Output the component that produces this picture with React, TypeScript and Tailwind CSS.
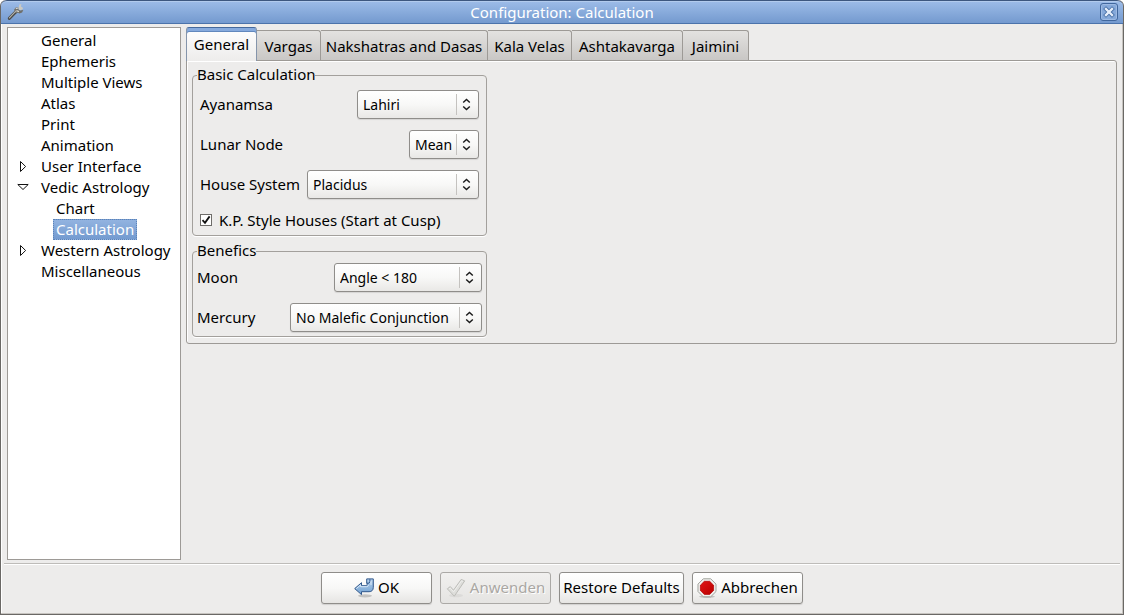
import React, { useState } from "react";

type TreeNode = { label: string; children?: TreeNode[] };

const tree: TreeNode[] = [
  { label: "General" },
  { label: "Ephemeris" },
  { label: "Multiple Views" },
  { label: "Atlas" },
  { label: "Print" },
  { label: "Animation" },
  { label: "User Interface", children: [] },
  { label: "Vedic Astrology", children: [{ label: "Chart" }, { label: "Calculation" }] },
  { label: "Western Astrology", children: [] },
  { label: "Miscellaneous" },
];

const tabs = [
  { label: "General", width: "w-[71px]" },
  { label: "Vargas", width: "w-[64px]" },
  { label: "Nakshatras and Dasas", width: "w-[167px]" },
  { label: "Kala Velas", width: "w-[84px]" },
  { label: "Ashtakavarga", width: "w-[111px]" },
  { label: "Jaimini", width: "w-[66px]" },
];

function WrenchIcon() {
  return (
    <svg width="18" height="18" viewBox="0 0 18 18" fill="none" aria-hidden="true">
      <path d="M3.3 15.4 10 8.6" stroke="#4b4b48" strokeWidth="3" strokeLinecap="round" />
      <path
        d="M8.8 9.2 8.2 6.4l1.6-1.9 2.4-.3.4 2.2 1.5 1.2 3.2-.7-1.2 2.5-2.6 1-1.9-.7-1 .7z"
        fill="#6f6f6a"
      />
      <path d="m12.6 4.8.7-3.2 2.1-.5-.4 2.5 2.1 1.3-.7 1.6-2.4.8-1.3-1z" fill="#c9c9c4" />
      <path d="M9.8 5.6 12 5M10.4 7.6l2.6 1" stroke="#d4d4ce" strokeWidth="1.2" />
      <path d="m3.4 14.8 6.4-6.6" stroke="#b3b3ac" strokeWidth="1.1" strokeLinecap="round" />
    </svg>
  );
}

function Expander({ open }: { open: boolean }) {
  return open ? (
    <svg width="12" height="12" viewBox="0 0 12 12" fill="#fff" stroke="#111" aria-hidden="true">
      <path d="M.8 2.5h10.4L6 7.5z" />
    </svg>
  ) : (
    <svg width="12" height="12" viewBox="0 0 12 12" fill="#fff" stroke="#111" aria-hidden="true">
      <path d="M3.5.5v10L8.6 5.5z" />
    </svg>
  );
}

function Tree({
  nodes,
  depth,
  selected,
  onSelect,
}: {
  nodes: TreeNode[];
  depth: number;
  selected: string;
  onSelect: (label: string) => void;
}) {
  return (
    <ul>
      {nodes.map((node) => (
        <li key={node.label}>
          <div className={depth === 0 ? "flex h-[21px] items-center pl-[9px]" : "flex h-[21px] items-center pl-6"}>
            <span className="flex w-[21px] shrink-0">
              {node.children && <Expander open={node.children.length > 0} />}
            </span>
            <button
              type="button"
              onClick={() => onSelect(node.label)}
              className={
                node.label === selected
                  ? "h-[21px] whitespace-nowrap border border-dotted border-[#5c83b8] bg-linear-to-b from-[#92b3e0] to-[#749bd0] px-[2px] leading-[19px] text-white"
                  : "h-[21px] whitespace-nowrap px-[3px] leading-[21px]"
              }
            >
              {node.label}
            </button>
          </div>
          {node.children && node.children.length > 0 && (
            <Tree nodes={node.children} depth={depth + 1} selected={selected} onSelect={onSelect} />
          )}
        </li>
      ))}
    </ul>
  );
}

function SelectRow({
  id,
  label,
  options,
  width,
}: {
  id: string;
  label: string;
  options: string[];
  width: string;
}) {
  return (
    <div className="flex h-[29px] items-center justify-between">
      <label htmlFor={id}>{label}</label>
      <div className={`relative h-[29px] ${width}`}>
        <select
          id={id}
          className="h-full w-full appearance-none rounded-[3px] border border-[#8f8d8a] bg-linear-to-b from-white via-[#f8f8f7] to-[#e9e8e6] pl-[5px] text-[14px] shadow-[0_1px_1px_rgba(0,0,0,0.1)]"
        >
          {options.map((o) => (
            <option key={o}>{o}</option>
          ))}
        </select>
        <span className="pointer-events-none absolute inset-y-1 right-2 flex items-center gap-[5px]">
          <span className="h-full w-px bg-[#c4c2bf]" />
          <svg width="9" height="13" viewBox="0 0 9 13" fill="none" stroke="#1a1a1a" strokeWidth="1.4" aria-hidden="true">
            <path d="M1.2 4.6 4.5 1.4l3.3 3.2M1.2 8.4l3.3 3.2 3.3-3.2" />
          </svg>
        </span>
      </div>
    </div>
  );
}

function ReturnIcon() {
  return (
    <svg width="20" height="20" viewBox="0 0 20 20" aria-hidden="true">
      <defs>
        <linearGradient id="ret" x1="0" y1="0" x2="0" y2="1">
          <stop offset="0" stopColor="#b9d3ee" />
          <stop offset="1" stopColor="#6e9fd0" />
        </linearGradient>
      </defs>
      <ellipse cx="11" cy="17.8" rx="7" ry="1.6" fill="#000" opacity=".18" />
      <path
        d="M12.7.9h6.6v8.4c0 3-1.7 4.4-4.2 4.4H7.5v2.9L.7 10.6l6.8-5.9v3h4.7c.6 0 .9-.3.9-.9V5.2h-.4z"
        fill="url(#ret)"
        stroke="#31588c"
        strokeLinejoin="round"
      />
      <path d="M12.9 5.2h2l1-1.3V1.2" fill="none" stroke="#31588c" />
      <path d="m2.3 10.6 4.3-3.7v1.8h6c1.2 0 1.8-.7 1.8-1.8M17 3v4" fill="none" stroke="#e1edf9" strokeWidth=".9" />
    </svg>
  );
}

function CheckIcon() {
  return (
    <svg width="20" height="20" viewBox="0 0 20 20" aria-hidden="true">
      <ellipse cx="10" cy="17.5" rx="7" ry="1.7" fill="#000" opacity=".05" />
      <path
        d="m1.3 10.8 3-2.2 3.2 3.6 7.7-10.8 3.5 1.5L8.3 18.2z"
        fill="#dededb"
        stroke="#bdbdb9"
        strokeLinejoin="round"
      />
      <path d="m2.9 11 1.3-.9 3.4 3.8 8-11.1 1.4.6" fill="none" stroke="#efefed" />
    </svg>
  );
}

function StopIcon() {
  return (
    <svg width="20" height="20" viewBox="0 0 20 20" aria-hidden="true">
      <defs>
        <linearGradient id="stop" x1="0" y1="0" x2="1" y2="1">
          <stop offset="0" stopColor="#e21616" />
          <stop offset="1" stopColor="#b80000" />
        </linearGradient>
      </defs>
      <ellipse cx="10" cy="18.6" rx="8" ry="1.3" fill="#000" opacity=".18" />
      <path d="M6.3.8h7.4l5.3 5.3v7.4l-5.3 5.3H6.3L1 13.5V6.1z" fill="#f2f2f0" stroke="#9fa19b" />
      <path d="M7.3 3.3h5.4l3.9 3.9v5.3l-3.9 3.9H7.3l-3.9-3.9V7.2z" fill="url(#stop)" stroke="#b00000" strokeWidth=".7" />
    </svg>
  );
}

const buttonBase = "flex h-8 items-center justify-center whitespace-nowrap rounded-[3px] border pb-px";
const buttonActive =
  "border-[#8f8d8a] bg-linear-to-b from-white via-[#f8f8f7] to-[#e6e5e3] shadow-[0_1px_1px_rgba(0,0,0,0.12)]";

export default function App() {
  const [selected, setSelected] = useState("Calculation");
  const [tab, setTab] = useState("General");
  const [kp, setKp] = useState(true);

  return (
    <div className="bg-white font-['Noto_Sans','Open_Sans',sans-serif] text-[15px] leading-5 text-black">
      <div className="flex h-screen flex-col rounded-t-[6px] border border-t-0 border-[#6a6865] bg-[#edeceb] shadow-[inset_-1px_-1px_0_#c6c3bf,inset_1px_0_0_#ffffff]">
        <header className="flex h-6 shrink-0 items-center rounded-t-[6px] border-b border-t border-b-[#4b73ab] border-t-[#3d577f] bg-linear-to-b from-[#9dbce8] to-[#749acf] px-[5px] shadow-[inset_0_1px_0_#b2cbed]">
          <WrenchIcon />
          <h1 className="flex-1 text-center text-white">Configuration: Calculation</h1>
          <button
            type="button"
            aria-label="Close"
            className="flex h-[18px] w-[18px] items-center justify-center rounded-[3px] border border-[#41679d] bg-[#86a9da] shadow-[inset_0_0_0_1px_#9dbae3]"
          >
            <svg width="12" height="12" viewBox="0 0 12 12" fill="none" aria-hidden="true">
              <path d="m3 3 6 6m0-6-6 6" stroke="#426ba3" strokeWidth="4" strokeLinecap="square" />
              <path d="m3 3 6 6m0-6-6 6" stroke="#e6eefa" strokeWidth="2.4" strokeLinecap="square" />
            </svg>
          </button>
        </header>

        <div className="flex min-h-0 flex-1 gap-[5px] px-1.5 pb-[3px] pt-[3px]">
          <nav aria-label="Sections" className="w-[174px] shrink-0 overflow-hidden border border-[#9d9a96] bg-white pt-0.5">
            <Tree nodes={tree} depth={0} selected={selected} onSelect={setSelected} />
          </nav>

          <main className="min-w-0 flex-1 leading-[19px]">
            <div role="tablist" className="flex h-[33px] items-end">
              {tabs.map((t) => (
                <button
                  key={t.label}
                  type="button"
                  role="tab"
                  aria-selected={t.label === tab}
                  onClick={() => setTab(t.label)}
                  className={`${t.width} shrink-0 whitespace-nowrap text-center ${
                    t.label === tab
                      ? "z-10 -mb-px h-[34px] overflow-hidden rounded-t-[3px] border-x border-t border-x-[#8595ab] border-t-[#45699c] bg-linear-to-b from-white to-[#edeceb] shadow-[inset_0_3px_0_#86aadd,inset_0_4px_0_#6288bd]"
                      : "h-[30px] rounded-tr-[3px] border-r border-t border-[#9d9a96] bg-linear-to-b from-[#e3e2e0] to-[#c9c7c5] pt-px"
                  }`}
                >
                  {t.label}
                </button>
              ))}
            </div>
            <section
              role="tabpanel"
              className="rounded-b-[3px] rounded-tr-[3px] border border-[#9d9a96] px-[5px] pb-1.5 pt-1 shadow-[inset_1px_1px_0_#ffffff]"
            >
              <fieldset className="w-[295px] rounded-[4px] border border-[#a3a09c] px-[7px] pb-[5px] shadow-[0_1px_0_#ffffff]">
                <legend className="-ml-[3px] h-5">Basic Calculation</legend>
                <div className="flex flex-col gap-[11px] pt-[5px]">
                  <SelectRow id="ayanamsa" label="Ayanamsa" options={["Lahiri"]} width="w-[122px]" />
                  <SelectRow id="node" label="Lunar Node" options={["Mean", "True"]} width="w-[70px]" />
                  <SelectRow id="house" label="House System" options={["Placidus"]} width="w-[172px]" />
                  <label className="flex h-5 items-center gap-[7px]">
                    <span className="relative flex h-3 w-3">
                      <input
                        type="checkbox"
                        checked={kp}
                        onChange={(e) => setKp(e.target.checked)}
                        className="h-3 w-3 appearance-none border border-[#6f6d6a] bg-white"
                      />
                      {kp && (
                        <svg
                          className="pointer-events-none absolute inset-0"
                          width="12"
                          height="12"
                          viewBox="0 0 12 12"
                          fill="none"
                          aria-hidden="true"
                        >
                          <path d="M2.5 6.2 5 8.8l4.6-6.4" stroke="#111" strokeWidth="1.8" />
                        </svg>
                      )}
                    </span>
                    K.P. Style Houses (Start at Cusp)
                  </label>
                </div>
              </fieldset>
              <fieldset className="mt-[5px] w-[295px] rounded-[4px] border border-[#a3a09c] px-1 pb-1 shadow-[0_1px_0_#ffffff]">
                <legend className="h-5">Benefics</legend>
                <div className="flex flex-col gap-[11px] pt-0.5">
                  <SelectRow id="moon" label="Moon" options={["Angle < 180"]} width="w-[148px]" />
                  <SelectRow id="mercury" label="Mercury" options={["No Malefic Conjunction"]} width="w-[192px]" />
                </div>
              </fieldset>
            </section>
          </main>
        </div>

        <footer className="mx-[3px] flex shrink-0 justify-center gap-2 border-t border-[#bebcb9] pb-2.5 pt-2 leading-[19px] shadow-[inset_0_1px_0_#ffffff]">
          <button type="button" className={`${buttonBase} ${buttonActive} w-[111px] gap-1`}>
            <ReturnIcon />
            OK
          </button>
          <button
            type="button"
            disabled
            className={`${buttonBase} w-[111px] gap-1 border-[#aba9a6] bg-linear-to-b from-[#f1f0ef] to-[#e5e4e2] text-[#aaa7a3] [text-shadow:1px_1px_0_#ffffff]`}
          >
            <CheckIcon />
            Anwenden
          </button>
          <button type="button" className={`${buttonBase} ${buttonActive} w-[125px]`}>
            Restore Defaults
          </button>
          <button type="button" className={`${buttonBase} ${buttonActive} w-[111px] gap-1`}>
            <StopIcon />
            Abbrechen
          </button>
        </footer>
      </div>
    </div>
  );
}
